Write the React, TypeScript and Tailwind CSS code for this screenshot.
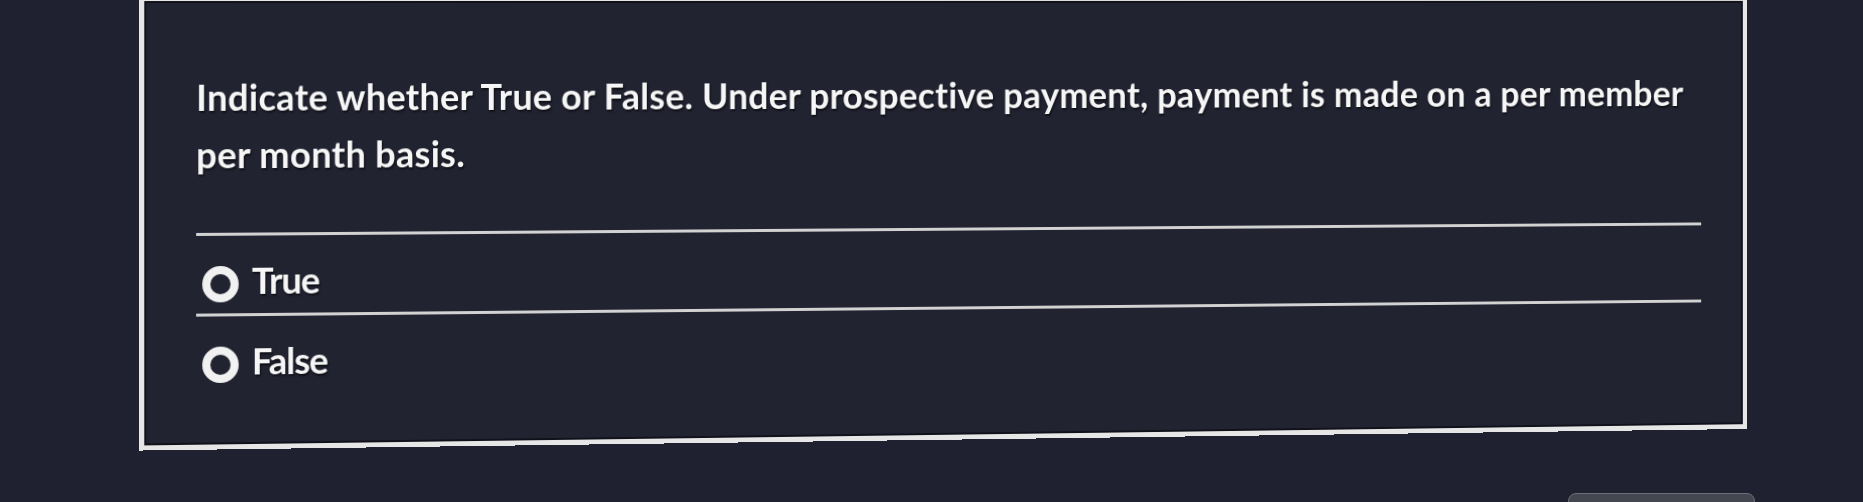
import React from "react";

type Choice = {
  id: string;
  label: string;
};

const question =
  "Indicate whether True or False. Under prospective payment, payment is made on a per member per month basis.";

const choices: Choice[] = [
  { id: "true", label: "True" },
  { id: "false", label: "False" },
];

function RadioRing() {
  return <span className="block h-[36px] w-[36px] shrink-0 rounded-full border-[8px] border-[#f1f1f1]" />;
}

function ChoiceRow({ choice }: { choice: Choice }) {
  return (
    <label className="flex items-center gap-[13px] pb-[11px] pl-[6px] pt-[30px]">
      <RadioRing />
      <span className="-mt-[8px] text-[36px] leading-[34px] tracking-[-0.03em]">{choice.label}</span>
    </label>
  );
}

export default function App() {
  return (
    <div className="h-[502px] w-full overflow-hidden bg-[#1f2130] font-[Lato,sans-serif] font-bold text-[#f6f6f6] [text-shadow:1px_2px_2px_rgba(0,0,0,0.55)]">
      {/* question card, seen slightly from the left */}
      <div className="ml-[142px] w-[1658px]">
        <div className="-mt-[2px] origin-[336px_0px] border-[5px] border-t-[3px] border-[#e6e6e6] bg-[#212331] pb-[50px] pl-[51px] pr-[45px] pt-[67px] shadow-[inset_0_0_0_2px_#10111a] [transform:perspective(2000px)_rotateY(3.43deg)]">
          <p className="text-[36px] leading-[57px] tracking-[0.008em]">{question}</p>

          <div className="mt-[49px] border-t-[3px] border-[#d2d2d2]" />
          <ChoiceRow choice={choices[0]} />
          <div className="border-t-[3px] border-[#d2d2d2]" />
          <ChoiceRow choice={choices[1]} />
        </div>
      </div>

      <div className="mt-[47px] flex w-[1755px] justify-end">
        <button
          type="button"
          aria-label="Next"
          className="h-[44px] w-[187px] rounded-[8px] border border-[#6c6f77] bg-[#44474f]"
        />
      </div>
    </div>
  );
}
